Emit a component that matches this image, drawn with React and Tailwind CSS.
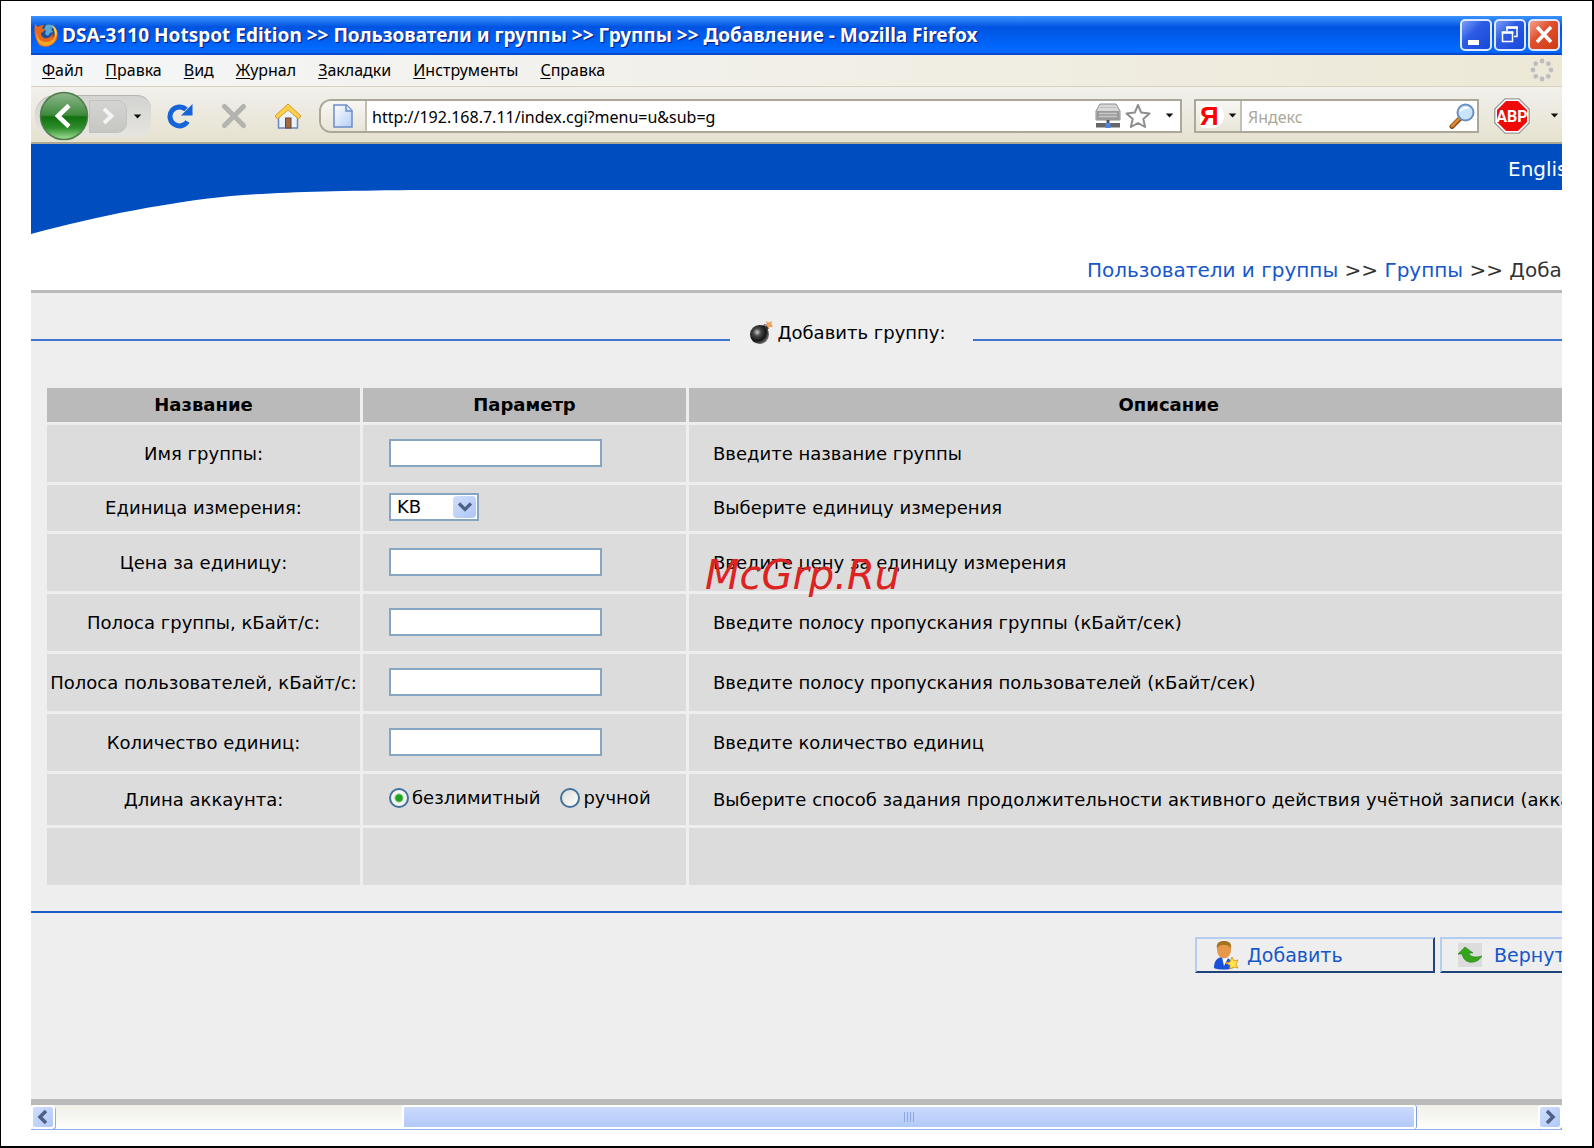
import React from "react";

const ui = "font-['Noto_Sans','Open_Sans',sans-serif]";

function Caret() {
  return (
    <svg viewBox="0 0 10 6" className="h-[5px] w-[9px] shrink-0" aria-hidden="true">
      <path d="M0.5 0.5h9L5 5.5z" fill="#111" />
    </svg>
  );
}

function FirefoxLogo() {
  return (
    <svg viewBox="0 0 24 24" className="h-6 w-6 shrink-0" aria-hidden="true">
      <circle cx="13" cy="10" r="9" fill="#1c4f96" />
      <path d="M12 2c4-1 7 0 8 2l-3 2 2 3-3 1-2 3-3-2 1-3-2-2z" fill="#5aa7d8" />
      <path d="M1 1l3 3C5 3 7 2 10 2L8 5l3 2-2 2-2 1c0 4 3 6 7 5 3-1 4-3 4-5 1 2 1 4 0 5 3-2 4-7 1-12 4 2 6 8 4 13-3 7-12 10-18 6C0 14 0 8 1 1z" fill="#e8691c" />
      <path d="M3 9c0 6 3 10 9 10 5 0 8-3 10-8 1 7-4 12-10 12S1 17 3 9z" fill="#f8a424" />
      <path d="M18 2c5 3 6 8 3.500 13-.5-4-1-8-3.500-13z" fill="#f9cf3c" />
    </svg>
  );
}

const winBtn =
  "flex h-8 w-8 items-center justify-center rounded-[5px] border-2 border-[#dfe8fb]";

function TitleBar() {
  return (
    <header className="flex h-[39px] shrink-0 items-center bg-linear-to-b from-[#3b93ff] via-[#0053e1] via-30% to-[#0068fd] to-85% border-b-2 border-[#0748cf] pl-[3px] pr-0.5">
      <FirefoxLogo />
      <h1 className="ml-1 flex-1 whitespace-nowrap pt-px font-['Noto_Sans',sans-serif] text-[19px] font-bold leading-6 text-white [text-shadow:1px_1px_1px_#0a1883]">
        DSA-3110 Hotspot Edition &gt;&gt; Пользователи и группы &gt;&gt; Группы &gt;&gt; Добавление - Mozilla Firefox
      </h1>
      <div className="flex gap-0.5">
        <button aria-label="Свернуть" className={winBtn + " bg-linear-to-br from-[#7d9df5] via-[#2d5be6] via-40% to-[#1548d8]"}>
          <svg viewBox="0 0 28 28" className="h-7 w-7"><path d="M6 19h11v5H6z" fill="#fff" /></svg>
        </button>
        <button aria-label="Восстановить" className={winBtn + " bg-linear-to-br from-[#7d9df5] via-[#2d5be6] via-40% to-[#1548d8]"}>
          <svg viewBox="0 0 28 28" className="h-7 w-7" fill="none" stroke="#fff">
            <path d="M11 10V6.500h10v9H18" strokeWidth="1.500" />
            <path d="M10.300 6.500h11.500" strokeWidth="2.500" />
            <rect x="6.500" y="11.500" width="10" height="9" strokeWidth="1.500" />
            <path d="M5.800 11.500h11.500" strokeWidth="2.500" />
          </svg>
        </button>
        <button aria-label="Закрыть" className={winBtn + " bg-linear-to-br from-[#f0a08a] via-[#e0512f] via-40% to-[#cf3a10]"}>
          <svg viewBox="0 0 28 28" className="h-7 w-7"><path d="M7 6l14 15M21 6L7 21" stroke="#fff" strokeWidth="3.500" /></svg>
        </button>
      </div>
    </header>
  );
}

const menus = ["Файл", "Правка", "Вид", "Журнал", "Закладки", "Инструменты", "Справка"];

function MenuBar() {
  return (
    <nav className="flex h-8 shrink-0 items-center justify-between border-b border-[#d8d2bd] bg-linear-to-r from-[#f5f6f8] to-[#ede8d6] pb-0.5 pl-[11px] pr-2 shadow-[0_1px_0_#fff]">
      <ul className="flex gap-[22px]">
        {menus.map((m) => (
          <li key={m}>
            <button className={ui + " block text-[16px] leading-6 text-black"}>
              <span className="underline underline-offset-2">{m[0]}</span>
              {m.slice(1)}
            </button>
          </li>
        ))}
      </ul>
      <svg viewBox="0 0 24 24" className="h-6 w-6" fill="#bdbcc0" aria-hidden="true">
        <circle cx="12" cy="3" r="2.400" /><circle cx="18.300" cy="5.700" r="2.400" />
        <circle cx="21" cy="12" r="2.400" /><circle cx="18.300" cy="18.300" r="2.400" />
        <circle cx="12" cy="21" r="2.400" /><circle cx="5.700" cy="18.300" r="2.400" />
        <circle cx="3" cy="12" r="2.400" /><circle cx="5.700" cy="5.700" r="2.400" />
      </svg>
    </nav>
  );
}

function NavButtons() {
  return (
    <div className="flex h-[42px] w-[116px] items-center rounded-l-[20px] rounded-r-[14px] border-t border-[#b5b5b2] bg-linear-to-b from-[#d3d3d1] to-[#e6e5df] pl-1">
      <button aria-label="Назад" className="h-[50px] w-[50px] shrink-0">
        <svg viewBox="0 0 50 50" className="h-[50px] w-[50px]">
          <defs>
            <linearGradient id="back" x1="0" y1="0" x2="0" y2="1">
              <stop offset="0" stopColor="#8fb98c" /><stop offset=".48" stopColor="#3f8a3f" />
              <stop offset=".52" stopColor="#12700f" /><stop offset=".75" stopColor="#2c8c2a" />
              <stop offset="1" stopColor="#a5e098" />
            </linearGradient>
          </defs>
          <circle cx="25" cy="25" r="23.500" fill="url(#back)" stroke="#4c7d4a" strokeWidth="1.500" />
          <path d="M30 14.500L19 25l11 10.500" fill="none" stroke="#fff" strokeWidth="4.500" />
        </svg>
      </button>
      <button aria-label="Вперёд" className="flex h-[33px] w-[38px] shrink-0 items-center justify-center rounded-r-[10px] border border-[#c2c2bf] bg-linear-to-b from-[#d4d4d2] to-[#c6c6c3]">
        <svg viewBox="0 0 16 20" className="h-5 w-4"><path d="M4 3l7.500 7L4 17" fill="none" stroke="#f4f4f4" strokeWidth="3.800" /></svg>
      </button>
      <button aria-label="История" className="ml-1.5"><Caret /></button>
    </div>
  );
}

function Toolbar() {
  return (
    <div className={ui + " flex h-[57px] shrink-0 items-center border-b-2 border-[#aca893] bg-linear-to-b from-[#f1f0ec] to-[#e6e2d0] pl-1 pr-[3px] pt-0.5"}>
      <NavButtons />
      <button aria-label="Обновить" className="ml-4">
        <svg viewBox="0 0 26 26" className="h-[26px] w-[26px]">
          <path d="M20.500 18.500A9.500 9.500 0 1 1 19 6.500" fill="none" stroke="#1763d8" strokeWidth="5" />
          <path d="M25.500 1v11.500H14z" fill="#1763d8" />
        </svg>
      </button>
      <button aria-label="Остановить" className="ml-7">
        <svg viewBox="0 0 26 26" className="h-[26px] w-[26px]">
          <path d="M3.500 3.500l19 19M22.500 3.500l-19 19" stroke="#b3b3af" strokeWidth="5" strokeLinecap="round" />
        </svg>
      </button>
      <button aria-label="Домой" className="ml-[27px]">
        <svg viewBox="0 0 28 28" className="h-7 w-7">
          <path d="M4.500 13L14 5l9.500 8v13h-19z" fill="#e9f1fb" stroke="#6b86b8" strokeWidth="1.500" />
          <rect x="11.500" y="16" width="5.500" height="10" fill="#9a6b45" stroke="#70452a" />
          <path d="M14 2L1 14l2.500 3L14 8l10.500 9 2.500-3z" fill="#fbd14b" stroke="#d99a22" />
        </svg>
      </button>
      <div className="ml-[17px] flex h-[34px] flex-1 items-center rounded-l-[12px] border-2 border-[#aca899] bg-white">
        <span className="flex h-full w-[46px] shrink-0 items-center justify-center rounded-l-[10px] border-r-2 border-[#c3c0b2] bg-linear-to-b from-[#f8f7f4] to-[#e8e5d8]">
          <svg viewBox="0 0 20 24" className="h-6 w-5">
            <defs>
              <linearGradient id="doc" x1="0" y1="0" x2="1" y2="1">
                <stop offset="0" stopColor="#fff" /><stop offset="1" stopColor="#b4cdf3" />
              </linearGradient>
            </defs>
            <path d="M1 1h12.500L19 6.500V23H1z" fill="url(#doc)" stroke="#6c8cc7" strokeWidth="1.500" />
            <path d="M13 1v6h6" fill="#dbe7fa" stroke="#6c8cc7" strokeWidth="1.500" />
          </svg>
        </span>
        <input
          aria-label="Адрес"
          defaultValue="http://192.168.7.11/index.cgi?menu=u&sub=g"
          className="h-full min-w-0 flex-1 bg-transparent pl-[5px] pt-0.5 text-[16px] text-black outline-none"
        />
        <svg viewBox="0 0 26 26" className="h-[26px] w-[26px]" aria-hidden="true">
          <path d="M5 1h16l4 7v9H1V8z" fill="#d9d9d9" stroke="#8c8c8c" />
          <path d="M1.500 8h23v9h-23z" fill="#9a9a9a" />
          <path d="M4 10.500h18M4 13.500h18" stroke="#c8c8c8" strokeWidth="1.500" />
          <path d="M5 4.500h16" stroke="#bdbdbd" />
          <path d="M1 20h24v4.500H1z" fill="#666" />
          <path d="M13 17v4" stroke="#555" strokeWidth="3" />
          <rect x="10.500" y="20" width="5" height="5" fill="#4b86e0" />
        </svg>
        <svg viewBox="0 0 26 26" className="ml-1 h-[26px] w-[26px]" aria-hidden="true">
          <path d="M13 2l3.200 7.600 8.300.8-6.200 5.500 1.800 8.100L13 20l-7.100 4 1.800-8.100L1.500 10.400l8.300-.8z" fill="#fff" stroke="#8d8d8d" strokeWidth="2" strokeLinejoin="round" />
        </svg>
        <button aria-label="Журнал адресов" className="ml-[14px] mr-[6px]"><Caret /></button>
      </div>
      <div className="ml-3 flex h-[34px] w-[285px] shrink-0 items-center border-2 border-[#aca899] bg-white">
        <button aria-label="Поисковая система" className="flex h-full w-[46px] items-center gap-1 border-r-2 border-[#c3c0b2] bg-linear-to-b from-[#f8f7f4] to-[#e8e5d8] pl-1">
          <span className="w-6 rounded-l-sm rounded-r-xl bg-white pr-1.5 text-center font-['Liberation_Sans',sans-serif] text-[26px] font-bold leading-6 text-[#f00]">Я</span>
          <Caret />
        </button>
        <input aria-label="Поиск" placeholder="Яндекс" className="h-full min-w-0 flex-1 pl-1.5 pt-0.5 text-[16px] outline-none placeholder:text-[#aca899]" />
        <button aria-label="Найти" className="mr-0.5">
          <svg viewBox="0 0 26 26" className="h-[26px] w-[26px]">
            <path d="M3 23.500l8-8" stroke="#8a4b16" strokeWidth="5" strokeLinecap="round" />
            <path d="M3 23l7-7" stroke="#dd8a35" strokeWidth="2.500" strokeLinecap="round" />
            <circle cx="16.500" cy="9.500" r="8" fill="#c9e5fb" stroke="#6a8fc4" strokeWidth="2" />
            <path d="M11 9a6 6 0 0 1 6-5.500c2 0 3 1 3 2-3 0-6 1-9 3.500z" fill="#fff" />
          </svg>
        </button>
      </div>
      <button aria-label="Adblock Plus" className="ml-[15px]">
        <svg viewBox="0 0 36 36" className="h-9 w-9">
          <path d="M11 .8h14L35.200 11v14L25 35.200H11L.8 25V11z" fill="#fff" stroke="#999" strokeWidth="1.300" />
          <path d="M12 3h12l9 9v12l-9 9H12l-9-9V12z" fill="#ee0a0a" />
          <text x="18" y="24" textAnchor="middle" fontSize="16" fontWeight="700" fill="#fff" fontFamily="Roboto, sans-serif">ABP</text>
        </svg>
      </button>
      <button aria-label="Меню Adblock" className="ml-5"><Caret /></button>
    </div>
  );
}

const rows = [
  { label: "Имя группы:", id: "name", kind: "text", hint: "Введите название группы" },
  { label: "Единица измерения:", id: "unit", kind: "select", hint: "Выберите единицу измерения" },
  { label: "Цена за единицу:", id: "price", kind: "text", hint: "Введите цену за единицу измерения" },
  { label: "Полоса группы, кБайт/с:", id: "gband", kind: "text", hint: "Введите полосу пропускания группы (кБайт/сек)" },
  { label: "Полоса пользователей, кБайт/с:", id: "uband", kind: "text", hint: "Введите полосу пропускания пользователей (кБайт/сек)" },
  { label: "Количество единиц:", id: "count", kind: "text", hint: "Введите количество единиц" },
  { label: "Длина аккаунта:", id: "length", kind: "radio", hint: "Выберите способ задания продолжительности активного действия учётной записи (аккаунта)" },
];

const heights = { text: "h-[57px]", select: "h-[46px]", radio: "h-[51px]" };

const radioCls =
  "h-5 w-5 appearance-none rounded-full border-2 border-[#41719c] bg-linear-to-br from-[#dcdcd7] to-white checked:bg-[radial-gradient(circle,#21a121_0_3px,#7fd07f_4px,#f4f4f1_5px)]";

function Control({ row }) {
  if (row.kind === "text")
    return <input id={row.id} type="text" className="block h-7 w-[213px] border-2 border-[#86a5c2] bg-white px-1 outline-none" />;
  if (row.kind === "select")
    return (
      <div className="relative w-[90px]">
        <select id={row.id} className="block h-7 w-full appearance-none border-2 border-[#86a5c2] bg-white pl-1.5 text-[18px] leading-6 text-black outline-none">
          <option>KB</option>
          <option>MB</option>
        </select>
        <span className="pointer-events-none absolute right-[3px] top-[3px] flex h-[22px] w-[23px] items-center justify-center rounded-sm bg-linear-to-br from-[#d0defc] to-[#adc6f8]">
          <svg viewBox="0 0 14 10" className="h-2.5 w-3.5"><path d="M1 1.500l6 6 6-6" fill="none" stroke="#4d6185" strokeWidth="3.200" /></svg>
        </span>
      </div>
    );
  return (
    <div className="flex gap-5 pb-0.5">
      <label className="flex items-center gap-[3px]"><input type="radio" name="len" defaultChecked className={radioCls} />безлимитный</label>
      <label className="flex items-center gap-[3px]"><input type="radio" name="len" className={radioCls} />ручной</label>
    </div>
  );
}

function GroupTable() {
  return (
    <table className="ml-[13px] mt-9 w-[105%] table-fixed border-separate border-spacing-[3px] text-black">
      <colgroup>
        <col className="w-[313px]" />
        <col className="w-[323px]" />
        <col />
      </colgroup>
      <thead>
        <tr className="h-[34px] bg-[#bababa] font-bold">
          <th scope="col">Название</th>
          <th scope="col">Параметр</th>
          <th scope="col">Описание</th>
        </tr>
      </thead>
      <tbody>
        {rows.map((r) => (
          <tr key={r.id} className={heights[r.kind] + " bg-[#dcdcdc]"}>
            <td className="whitespace-nowrap p-0 text-center">
              {r.kind === "radio" ? r.label : <label htmlFor={r.id}>{r.label}</label>}
            </td>
            <td className="whitespace-nowrap p-0 pb-0.5 pl-[26px]"><Control row={r} /></td>
            <td className="whitespace-nowrap p-0 pl-6">{r.hint}</td>
          </tr>
        ))}
        <tr className="h-[57px] bg-[#dcdcdc]"><td /><td /><td /></tr>
      </tbody>
    </table>
  );
}

const actionCls =
  "flex h-9 w-[240px] shrink-0 items-center border-2 border-l-[#b4cdf0] border-t-[#b4cdf0] border-b-[#1f4479] border-r-[#1f4479] bg-[#eee] pl-4 text-[19px] text-[#1557cb]";

function Page() {
  return (
    <main className="flex flex-1 flex-col overflow-hidden bg-white font-['DejaVu_Sans',sans-serif] text-[18px] leading-6">
      <div className="flex h-[46px] shrink-0 items-center justify-end bg-[#004dc0] pt-1">
        <a href="#english" className="w-[54px] shrink-0 whitespace-nowrap text-[20px] text-white">English</a>
      </div>
      <svg viewBox="0 0 380 44" className="h-11 w-[380px] shrink-0" aria-hidden="true">
        <path d="M0 0H380C300 1 250 2 200 6C140 12 70 25 0 44z" fill="#004dc0" />
      </svg>
      <div className="flex h-14 shrink-0 items-center justify-end pt-4 text-[#333]">
        <p className="w-[475px] whitespace-nowrap text-[20px]">
          <a href="#users" className="text-[#1557cb]">Пользователи и группы</a> &gt;&gt; <a href="#groups" className="text-[#1557cb]">Группы</a> &gt;&gt; Добавление
        </p>
      </div>
      <div className="flex flex-1 flex-col border-b-[6px] border-t-[3px] border-[#bababa] bg-[#eee]">
        <div className="mt-7 flex items-end">
          <div className="mb-2 h-0.5 flex-[699] bg-[#3f75cf]" />
          <h2 className="flex w-[243px] shrink-0 items-center justify-center gap-1 pb-1 pr-2">
            <svg viewBox="0 0 24 24" className="h-6 w-6 shrink-0" aria-hidden="true">
              <defs>
                <radialGradient id="bomb" cx=".38" cy=".38" r=".65">
                  <stop offset="0" stopColor="#d0d0d0" /><stop offset=".3" stopColor="#4a4a4a" />
                  <stop offset=".7" stopColor="#151515" /><stop offset="1" stopColor="#777" />
                </radialGradient>
              </defs>
              <path d="M12 6l4-3 4 4-3 4z" fill="#333" />
              <path d="M16 5c1-2 3-1 4-1" stroke="#b98" strokeWidth="2" fill="none" />
              <path d="M17 0l3 1.500L23 0l-.5 3L24 6l-3 0-2 1.500-.5-3z" fill="#eda45c" />
              <circle cx="10.500" cy="13.500" r="9.500" fill="url(#bomb)" />
            </svg>
            <span className="whitespace-nowrap">Добавить группу:</span>
          </h2>
          <div className="mb-2 h-0.5 flex-[589] bg-[#3f75cf]" />
        </div>
        <GroupTable />
        <div className="mt-[23px] h-0.5 bg-[#1a5ccc]" />
        <div className="mt-6 flex justify-end">
          <div className="flex w-[367px] gap-[5px]">
            <button className={actionCls}>
              <svg viewBox="0 0 26 30" className="mr-2 h-[30px] w-[26px]" aria-hidden="true">
                <path d="M1 28c0-7 3-11 9-11s10 4 10 11c-4 2-15 2-19 0z" fill="#1b50d8" />
                <path d="M9 17l2 9 4-8z" fill="#fff" />
                <ellipse cx="11" cy="10" rx="7" ry="8.500" fill="#e8964a" />
                <path d="M4 9C3 3 6 1 11 1s8 2 7 8c-1-3-3-4-7-4S5 6 4 9z" fill="#a4731f" />
                <path d="M19 17l2 4 4-1-2 4 2 4-4-1-4 2 0-4-4-2 4-1z" fill="#ffe34a" stroke="#e0a020" />
              </svg>
              Добавить
            </button>
            <button className={actionCls}>
              <svg viewBox="0 0 24 24" className="mr-3 h-6 w-6 bg-[#dcdcdc]" aria-hidden="true">
                <path d="M0 11L7 4l8 6h-4c1 4 6 5 13 3-3 5-8 7-13 6-4-1-6-4-7-8z" fill="#35a51b" stroke="#267a16" strokeWidth=".6" />
              </svg>
              Вернуться
            </button>
          </div>
        </div>
      </div>
    </main>
  );
}

const scrollBtn =
  "flex h-6 w-6 shrink-0 items-center justify-center rounded-[4px] border-2 border-white bg-linear-to-br from-[#d0defc] to-[#b0c8f8] shadow-[1px_1px_0_#8fb0e8]";

function ScrollBar() {
  return (
    <div className="flex h-[25px] shrink-0 items-center border-b border-[#8fb0e8] bg-linear-to-b from-[#f0efe8] to-[#fefefb]">
      <button aria-label="Влево" className={scrollBtn}>
        <svg viewBox="0 0 12 16" className="h-4 w-3"><path d="M9 2L3 8l6 6" fill="none" stroke="#4d6185" strokeWidth="3.500" /></svg>
      </button>
      <div className="flex-[348]" />
      <div className="flex h-6 flex-[1013] items-center justify-center gap-0.5 rounded-[3px] border-2 border-white bg-linear-to-b from-[#cbd9fd] to-[#b2caf8] shadow-[1px_0_0_#7f9fd8]">
        <span className="h-2.5 w-px bg-[#8fa9e0]" />
        <span className="h-2.5 w-px bg-[#8fa9e0]" />
        <span className="h-2.5 w-px bg-[#8fa9e0]" />
        <span className="h-2.5 w-px bg-[#8fa9e0]" />
      </div>
      <div className="flex-[122]" />
      <button aria-label="Вправо" className={scrollBtn}>
        <svg viewBox="0 0 12 16" className="h-4 w-3"><path d="M3 2l6 6-6 6" fill="none" stroke="#4d6185" strokeWidth="3.500" /></svg>
      </button>
    </div>
  );
}

export default function App() {
  return (
    <div className="relative flex min-h-screen flex-col border-b-2 border-l border-r-2 border-t border-black bg-white px-[30px] pb-4 pt-[15px]">
      <div className="flex flex-1 flex-col overflow-hidden">
        <TitleBar />
        <MenuBar />
        <Toolbar />
        <Page />
        <ScrollBar />
      </div>
      <p className="pointer-events-none absolute inset-x-0 top-[550px] pl-3 text-center font-['DejaVu_Sans',sans-serif] text-[40px] italic leading-12 text-[#dd2222]">
        McGrp.Ru
      </p>
    </div>
  );
}
